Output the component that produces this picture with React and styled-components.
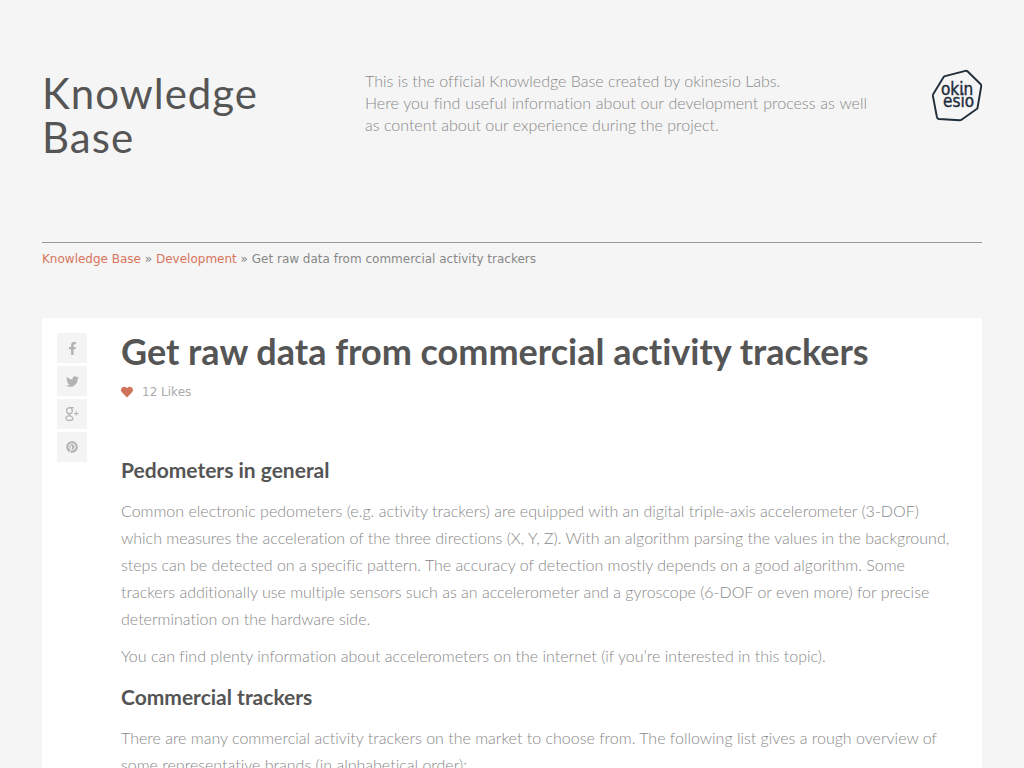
import React from "react";
import styled, { createGlobalStyle } from "styled-components";
import { FaFacebookF, FaTwitter, FaPinterest, FaHeart } from "react-icons/fa";

const GlobalStyle = createGlobalStyle`
  * { box-sizing: border-box; }
  body {
    margin: 0;
    background: #f5f5f5;
    color: #888;
    font-family: Lato, "Liberation Sans", sans-serif;
    font-size: 16px;
    font-weight: 300;
    font-variant-ligatures: none;
  }
`;

const Page = styled.div`
  max-width: 1024px;
  margin: 0 auto;
  padding: 70px 42px 0;
`;

const Header = styled.header`
  display: grid;
  grid-template-columns: 258px minmax(0, 1fr) 50px;
  column-gap: 65px;
  align-items: start;
  padding-bottom: 83px;
  border-bottom: 1px solid #999;
`;

const SiteTitle = styled.div`
  padding-top: 1px;
  color: #555;
  font-size: 42px;
  line-height: 44px;
  font-weight: 400;
  letter-spacing: 1px;
`;

const Intro = styled.p`
  margin: 0;
  line-height: 22px;
  text-align: justify;
`;

const LogoLink = styled.a`
  display: block;
  svg { display: block; overflow: visible; }
`;

const LogoText = styled.text`
  font-family: "DejaVu Sans Condensed", "DejaVu Sans", sans-serif;
  font-size: 17px;
  font-weight: 400;
  fill: #212d3b;
  stroke: #212d3b;
  stroke-width: 0.4;
`;

const Breadcrumbs = styled.nav`
  padding-top: 8px;
  color: #888;
  font: 400 12px/16px "DejaVu Sans", sans-serif;
  a { color: #d9745c; text-decoration: none; }
`;

const Card = styled.main`
  display: grid;
  grid-template-columns: 30px minmax(0, 1fr);
  column-gap: 34px;
  margin-top: 51px;
  padding: 15px 32px 40px 15px;
  background: #fff;
`;

const ShareList = styled.div`
  display: flex;
  flex-direction: column;
  gap: 3px;
`;

const ShareLink = styled.a`
  display: flex;
  align-items: center;
  justify-content: center;
  height: 30px;
  background: #f4f4f4;
  color: #b3b3b3;
`;

const Title = styled.h1`
  margin: 0;
  color: #555;
  font-size: 36px;
  line-height: 36px;
  font-weight: 700;
`;

const LikeButton = styled.button`
  display: flex;
  align-items: center;
  gap: 9px;
  margin: 15px 0 57px;
  padding: 0;
  border: 0;
  background: none;
  color: #aaa;
  font: 400 12px/16px "DejaVu Sans", sans-serif;
  svg { color: #d0735b; }
`;

const SubTitle = styled.h2`
  margin: 15px 0 14px;
  color: #555;
  font-size: 21px;
  line-height: 26px;
  font-weight: 700;
`;

const Paragraph = styled.p`
  margin: 0 0 10px;
  line-height: 27px;
`;

const Logo = () => (
  <svg width="50" height="52" viewBox="0 0 50 52" role="img" aria-label="okinesio">
    <path d="M13 6.200 33.500.9Q34.800.6 35.700 1.500L48.500 14Q49.500 15 49.200 16.500L45.400 38.500 29.500 49.700Q28.600 50.400 27.500 50.300L7 49Q5.300 48.800 4.900 47L.9 26Q.7 24.800 1.300 24L11.500 7.300Q12 6.500 13 6.200Z" fill="none" stroke="#212d3b" strokeWidth="1.900" strokeLinejoin="round" />
    <LogoText x="9" y="25">okin</LogoText>
    <LogoText x="11" y="37">esio</LogoText>
  </svg>
);

const GooglePlus = () => (
  <svg width="14" height="14" viewBox="0 0 14 14" fill="none" stroke="currentColor" aria-hidden="true">
    <path d="M8.600.7H5.200C3 .7 1.600 2 1.600 3.800S2.800 6.700 4.400 6.700 7.300 5.600 7.300 3.800C7.300 2.300 6.500 1 5.200.7M5.200 6.700C4.200 7.400 4.400 8.100 5.300 8.700 6.800 9.600 7.900 10.100 7.900 11.400 7.900 12.700 6.500 13.400 4.600 13.400S.9 12.700.9 11.200 2.500 8.800 5.300 8.700" strokeWidth="1.300" />
    <path d="M11.200 4.200V8.800M9 6.500H13.500" />
  </svg>
);

const networks = [
  { name: "Facebook", icon: <FaFacebookF size={13} /> },
  { name: "Twitter", icon: <FaTwitter size={13} /> },
  { name: "Google Plus", icon: <GooglePlus /> },
  { name: "Pinterest", icon: <FaPinterest size={12} /> },
];

export default function App() {
  return (
    <>
      <GlobalStyle />
      <Page>
        <Header>
          <SiteTitle>Knowledge Base</SiteTitle>
          <Intro>
            This is the official Knowledge Base created by okinesio Labs.
            <br />
            Here you find useful information about our development process as well as content about our experience during the project.
          </Intro>
          <LogoLink href="#home"><Logo /></LogoLink>
        </Header>
        <Breadcrumbs aria-label="Breadcrumb">
          <a href="#knowledge-base">Knowledge Base</a> » <a href="#development">Development</a> » Get raw data from commercial activity trackers
        </Breadcrumbs>
        <Card>
          <ShareList>
            {networks.map(({ name, icon }) => (
              <ShareLink key={name} href="#share" aria-label={name}>{icon}</ShareLink>
            ))}
          </ShareList>
          <article>
            <Title>Get raw data from commercial activity trackers</Title>
            <LikeButton type="button"><FaHeart size={12} />12 Likes</LikeButton>
            <SubTitle>Pedometers in general</SubTitle>
            <Paragraph>
              Common electronic pedometers (e.g. activity trackers) are equipped with an digital triple-axis accelerometer (3-DOF) which measures the acceleration of the three directions (X, Y, Z). With an algorithm parsing the values in the background, steps can be detected on a specific pattern. The accuracy of detection mostly depends on a good algorithm. Some trackers additionally use multiple sensors such as an accelerometer and a gyroscope (6-DOF or even more) for precise determination on the hardware side.
            </Paragraph>
            <Paragraph>
              You can find plenty information about accelerometers on the internet (if you’re interested in this topic).
            </Paragraph>
            <SubTitle>Commercial trackers</SubTitle>
            <Paragraph>
              There are many commercial activity trackers on the market to choose from. The following list gives a rough overview of some representative brands (in alphabetical order):
            </Paragraph>
          </article>
        </Card>
      </Page>
    </>
  );
}
